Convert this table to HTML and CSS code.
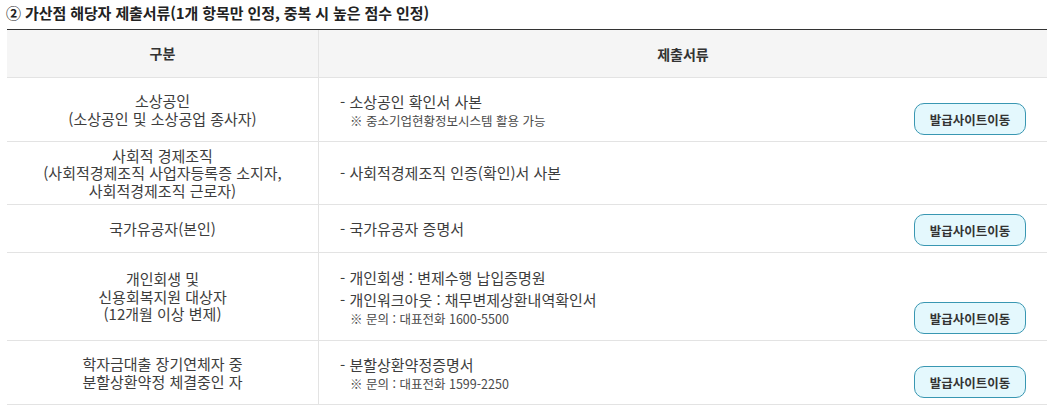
FILE: index.html
```html
<!DOCTYPE html>
<html lang="ko">
<head>
<meta charset="utf-8">
<title>가산점 해당자 제출서류</title>
<link rel="stylesheet" href="styles.css">
</head>
<body>
<h3 class="title">② 가산점 해당자 제출서류(1개 항목만 인정, 중복 시 높은 점수 인정)</h3>
<div class="table">
  <div class="cell head c1">구분</div>
  <div class="cell head c2h">제출서류</div>

  <div class="cell c1"><p>소상공인</p><p>(소상공인 및 소상공업 종사자)</p></div>
  <div class="cell c2">
    <div class="docs">
      <p class="item">- 소상공인 확인서 사본</p>
      <p class="note">※ 중소기업현황정보시스템 활용 가능</p>
    </div>
    <a class="btn" href="#">발급사이트이동</a>
  </div>

  <div class="cell c1"><p>사회적 경제조직</p><p>(사회적경제조직 사업자등록증 소지자,</p><p>사회적경제조직 근로자)</p></div>
  <div class="cell c2">
    <div class="docs">
      <p class="item">- 사회적경제조직 인증(확인)서 사본</p>
    </div>
  </div>

  <div class="cell c1"><p>국가유공자(본인)</p></div>
  <div class="cell c2">
    <div class="docs">
      <p class="item">- 국가유공자 증명서</p>
    </div>
    <a class="btn" href="#">발급사이트이동</a>
  </div>

  <div class="cell c1"><p>개인회생 및</p><p>신용회복지원 대상자</p><p>(12개월 이상 변제)</p></div>
  <div class="cell c2">
    <div class="docs">
      <p class="item">- 개인회생 : 변제수행 납입증명원</p>
      <p class="item">- 개인워크아웃 : 채무변제상환내역확인서</p>
      <p class="note">※ 문의 : 대표전화 1600-5500</p>
    </div>
    <a class="btn" href="#">발급사이트이동</a>
  </div>

  <div class="cell c1"><p>학자금대출 장기연체자 중</p><p>분할상환약정 체결중인 자</p></div>
  <div class="cell c2">
    <div class="docs">
      <p class="item">- 분할상환약정증명서</p>
      <p class="note">※ 문의 : 대표전화 1599-2250</p>
    </div>
    <a class="btn" href="#">발급사이트이동</a>
  </div>
</div>
</body>
</html>
```
FILE: styles.css
```css
* { box-sizing: border-box; }
html, body { margin: 0; background: #fff; }
body {
  padding: 3px 4px 0 7px;
  font-family: "Noto Sans CJK KR", "Noto Sans", sans-serif;
  color: #3d3d3d;
}
p { margin: 0; }
.title {
  margin: 0 0 6px -1px;
  font-size: 15px;
  line-height: 20px;
  font-weight: 700;
  color: #222;
  letter-spacing: -0.1px;
}
.table {
  width: 1040px;
  display: grid;
  grid-template-columns: 312px 1fr;
  grid-template-rows: 48px 64px 63px 48px 88px 64px;
  border-top: 1px solid #333;
}
.cell {
  border-bottom: 1px solid #e3e3e3;
  font-size: 15px;
}
.head {
  background: #f5f5f5;
  font-weight: 700;
  font-size: 14px;
  color: #333;
  display: flex;
  align-items: center;
  justify-content: center;
}
.c1 {
  border-right: 1px solid #e3e3e3;
  display: flex;
  flex-direction: column;
  align-items: center;
  justify-content: center;
  text-align: center;
  line-height: 17.5px;
}
.c2 {
  display: flex;
  align-items: center;
  padding: 0 21px 6px 21px;
}
.docs {
  flex: 1;
  padding-top: 6px;
}
.item {
  line-height: 22px;
}
.note {
  font-size: 12.5px;
  line-height: 16px;
  padding-left: 10px;
  color: #4a4a4a;
}
.btn {
  align-self: flex-end;
  width: 112px;
  height: 32px;
  border: 1px solid #3997b2;
  border-radius: 10px;
  background: #e4f8fd;
  color: #333;
  font-size: 12.5px;
  font-weight: 700;
  text-decoration: none;
  display: flex;
  align-items: center;
  justify-content: center;
}
```
